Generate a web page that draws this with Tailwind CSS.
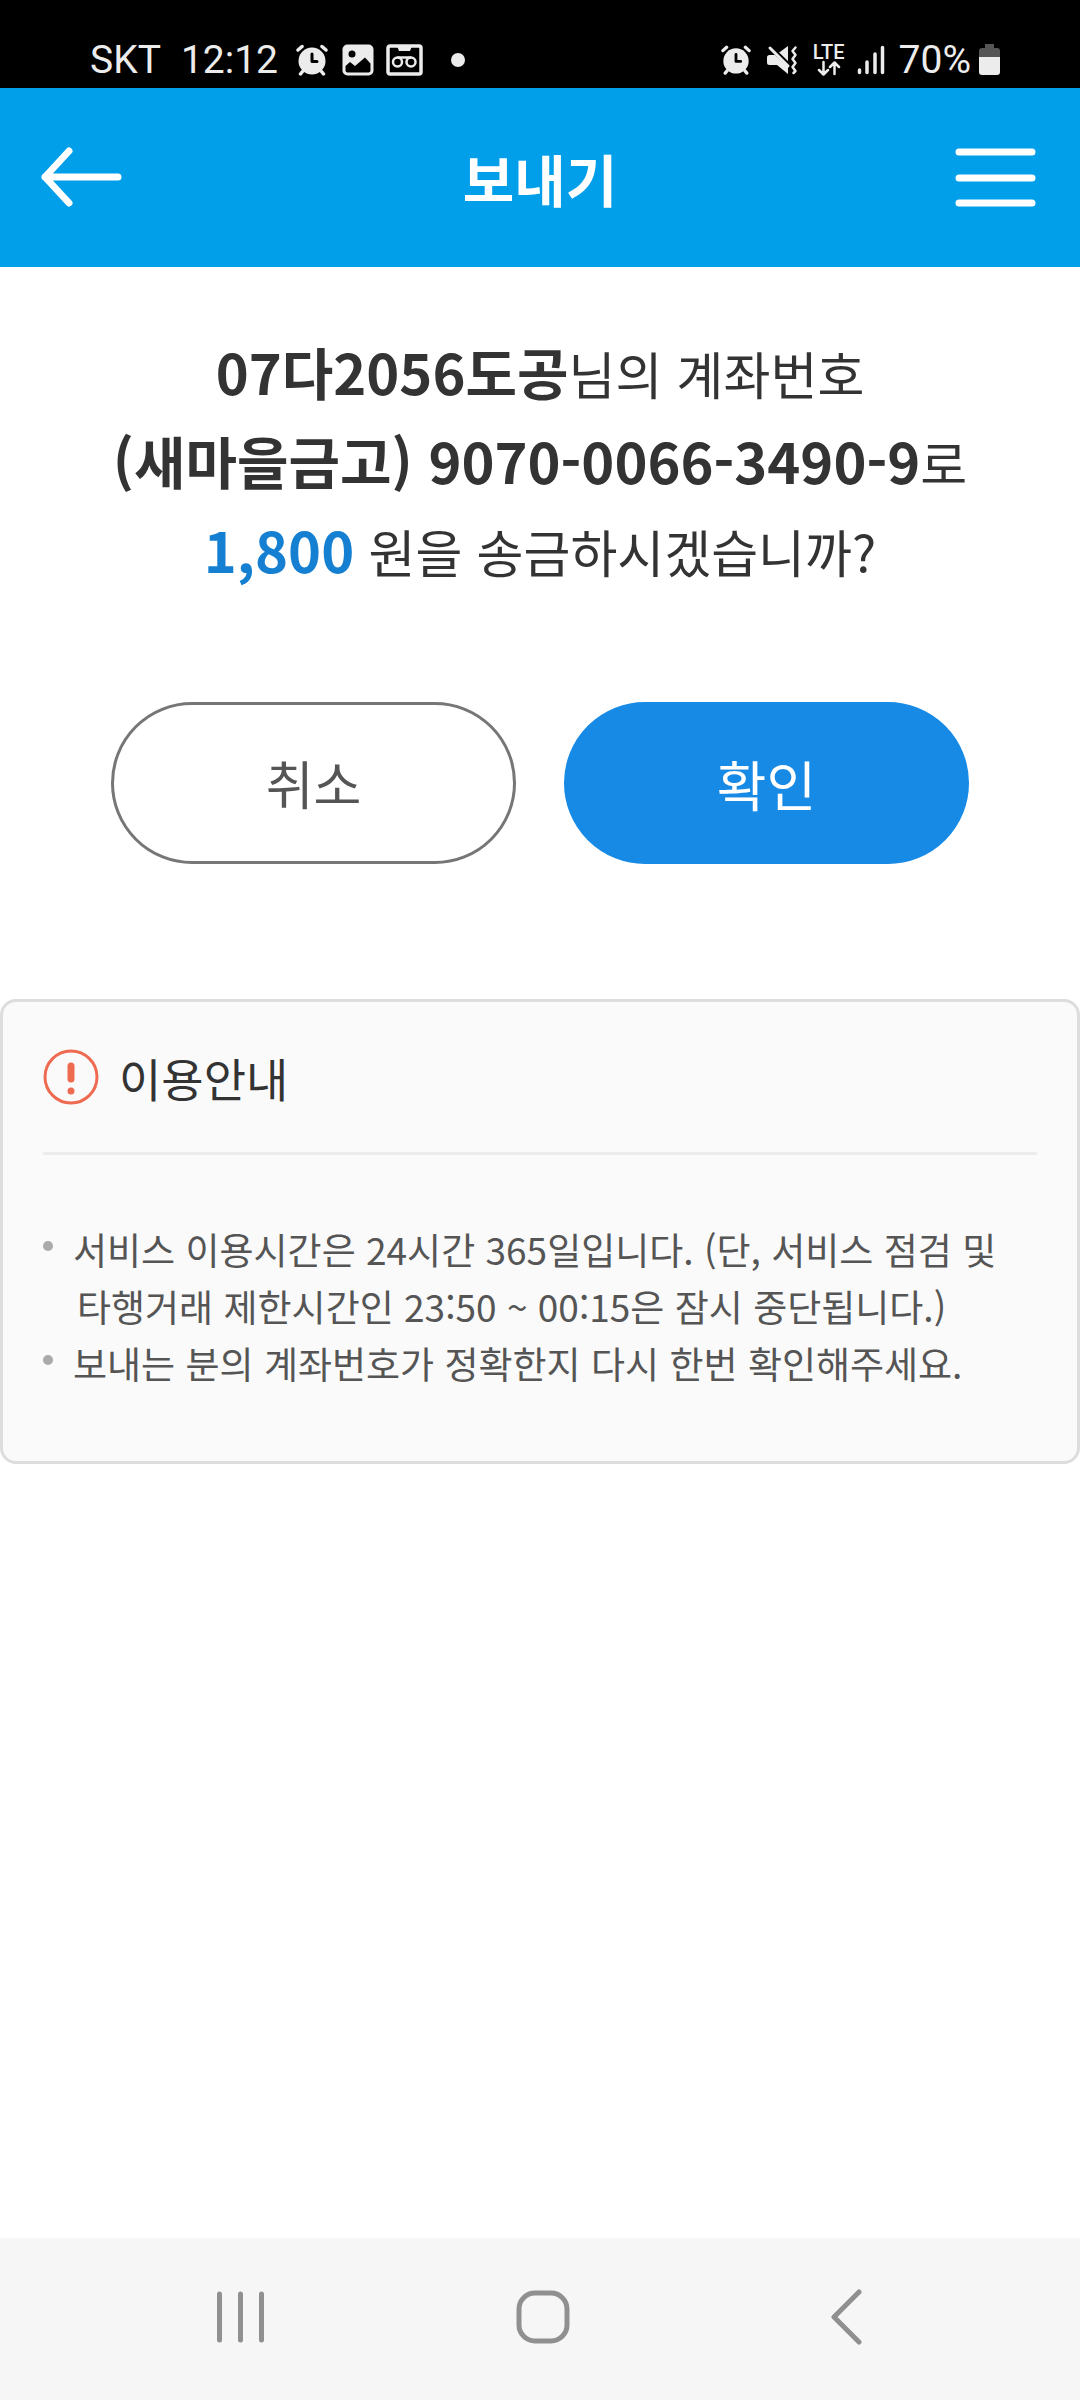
<!DOCTYPE html>
<html lang="ko">
<head>
<meta charset="utf-8">
<meta name="viewport" content="width=device-width, initial-scale=1">
<title>보내기</title>
<script src="https://cdn.jsdelivr.net/npm/@tailwindcss/browser@4"></script>
</head>
<body class="flex min-h-screen flex-col bg-white font-['Noto_Sans_CJK_KR',sans-serif] text-[#333333]">

<!-- Device status bar -->
<div class="flex h-22 items-center justify-between bg-black pt-8 pr-20 pl-[90px] font-['Roboto',sans-serif] text-[39px] leading-none text-[#ececec]">
  <div class="flex items-center">
    <span>SKT</span>
    <span class="ml-5">12:12</span>
    <svg class="ml-[18px] size-8" viewBox="0 0 32 32" fill="none" stroke="currentColor" aria-hidden="true">
      <circle cx="16" cy="17" r="13.500" fill="currentColor" stroke="none"/>
      <path d="M2 6 6 2.500M26 2.500 30 6M6.500 27.500l-2 2.500M25.500 27.500l2 2.500" stroke-width="3.500" stroke-linecap="round"/>
      <path d="M16 10v7.500h5" stroke="#000" stroke-width="3" stroke-linecap="round" stroke-linejoin="round"/>
    </svg>
    <svg class="ml-3.5 size-8" viewBox="0 0 32 32" aria-hidden="true">
      <rect x="0.500" y="0.500" width="31" height="31" rx="5" fill="currentColor"/>
      <circle cx="10" cy="10" r="3.500" fill="#000"/>
      <path d="M3.500 22 8 18l5 4 10-8.500 5.500 6v7q0 2-2 2H5.500q-2 0-2-2z" fill="#000"/>
    </svg>
    <svg class="ml-3 h-8 w-[37px]" viewBox="0 0 37 32" fill="none" stroke="currentColor" aria-hidden="true">
      <rect x="2" y="2" width="33" height="28" rx="2" stroke-width="3.500"/>
      <path d="M11 2h15l-2 5H13z" fill="currentColor" stroke="none"/>
      <circle cx="11.500" cy="18" r="4.500" stroke-width="2.500"/>
      <circle cx="25" cy="18" r="4.500" stroke-width="2.500"/>
      <path d="M11.500 13.500H25" stroke-width="2.500"/>
    </svg>
    <span class="ml-7 size-3.5 rounded-full bg-[#ececec]"></span>
  </div>
  <div class="flex items-center">
    <svg class="size-[30px]" viewBox="0 0 32 32" fill="none" stroke="currentColor" aria-hidden="true">
      <circle cx="16" cy="17" r="13.500" fill="currentColor" stroke="none"/>
      <path d="M2 6 6 2.500M26 2.500 30 6M6.500 27.500l-2 2.500M25.500 27.500l2 2.500" stroke-width="3.500" stroke-linecap="round"/>
      <path d="M16 10v7.500h5" stroke="#000" stroke-width="3" stroke-linecap="round" stroke-linejoin="round"/>
    </svg>
    <svg class="ml-4 h-[30px] w-8" viewBox="0 0 32 30" fill="none" stroke="currentColor" aria-hidden="true">
      <path d="M0 12.500Q0 10 2.500 10H8l13 12v7L10 20H2.500Q0 20 0 17.500zM11.500 8 21 1v16z" fill="currentColor" stroke="none"/>
      <path d="M5 2l17 16.500" stroke="#000" stroke-width="2"/>
      <path d="M3 3l18 18" stroke-width="3" stroke-linecap="round"/>
      <path d="M28.500 2.500l-3 3.500 3 4-3 4 3 4-3 4 3 4-2 2" stroke-width="2.500" stroke-linecap="round" stroke-linejoin="round"/>
    </svg>
    <span class="ml-3.5 flex w-8 flex-col items-center">
      <span class="text-[20px] leading-4 font-medium">LTE</span>
      <svg class="h-4 w-6" viewBox="0 0 24 16" fill="none" stroke="currentColor" stroke-width="2.500" stroke-linecap="round" stroke-linejoin="round" aria-hidden="true">
        <path d="M6.500 2v12M2 10l4.500 4.500L11 10M17.500 14V3M13 7l4.500-4.500L22 7"/>
      </svg>
    </span>
    <svg class="ml-3 h-[30px] w-7" viewBox="0 0 28 30" fill="none" stroke="currentColor" stroke-width="3.500" stroke-linecap="round" aria-hidden="true">
      <path d="M2.500 25v2.500M10 17v10.500M18 9v18.500M25.500 2.500v25"/>
    </svg>
    <span class="ml-3.5">70%</span>
    <svg class="ml-2 h-8 w-[21px]" viewBox="0 0 21 32" aria-hidden="true">
      <path d="M6 0h9v4h3q3 0 3 3v6H0V7q0-3 3-3h3z" fill="#555"/>
      <path d="M0 13h21v15q0 3-3 3H3q-3 0-3-3z" fill="currentColor"/>
    </svg>
  </div>
</div>

<header class="flex h-[179px] items-center justify-between bg-[#019ee9] px-10 text-white">
  <button type="button" aria-label="뒤로" class="h-16 w-[85px]">
    <svg class="size-full" viewBox="0 0 85 64" fill="none" stroke="currentColor" stroke-width="7" stroke-linecap="round" stroke-linejoin="round" aria-hidden="true">
      <path d="M5 31h73M29 5 5 31l24 26"/>
    </svg>
  </button>
  <h1 class="text-[56px] leading-20 font-bold">보내기</h1>
  <button type="button" aria-label="메뉴" class="h-16 w-[85px]">
    <svg class="size-full" viewBox="0 0 85 64" fill="none" stroke="currentColor" stroke-width="7" stroke-linecap="round" aria-hidden="true">
      <path d="M4 6h73M4 32h73M4 57h73"/>
    </svg>
  </button>
</header>

<main class="flex-1">
  <p class="pt-[62px] text-center text-[51px] leading-[89px]">
    <strong class="text-[56px] leading-none font-bold">07다2056도공</strong>님의 계좌번호<br>
    <strong class="text-[56px] leading-none font-bold">(새마을금고) 9070-0066-3490-9</strong>로<br>
    <strong class="text-[56px] leading-none font-bold text-[#157fd1]">1,800</strong> 원을 송금하시겠습니까?
  </p>

  <div class="mt-[106px] flex gap-12 px-[111px]">
    <button type="button" class="h-[162px] flex-1 rounded-full border-3 border-[#767676] bg-white text-[52px] text-[#555555]">취소</button>
    <button type="button" class="h-[162px] flex-1 rounded-full border-3 border-[#178ae6] bg-[#178ae6] text-[54px] text-white">확인</button>
  </div>

  <section class="mt-[135px] rounded-2xl border-3 border-[#dddddd] bg-[#fafafa] px-10 pb-[69px]">
    <div class="flex h-[153px] items-center gap-5 border-b-3 border-[#ececec]">
      <svg class="size-14" viewBox="0 0 56 56" fill="none" stroke="#ee6a50" aria-hidden="true">
        <circle cx="28" cy="28" r="26" stroke-width="3"/>
        <path d="M28 17v13" stroke-width="7" stroke-linecap="round"/>
        <circle cx="28" cy="42" r="3.500" fill="#ee6a50" stroke="none"/>
      </svg>
      <h2 class="text-[46px] leading-14">이용안내</h2>
    </div>
    <ul class="pt-[66px] text-[37px] leading-[57px] text-[#555555]">
      <li class="flex gap-5">
        <span class="mt-5 size-2.5 shrink-0 rounded-full bg-[#aaaaaa]"></span>
        <span class="pl-1 -indent-1">서비스 이용시간은 24시간 365일입니다. (단, 서비스 점검 및<br>타행거래 제한시간인 23:50 ~ 00:15은 잠시 중단됩니다.)</span>
      </li>
      <li class="flex gap-5">
        <span class="mt-5 size-2.5 shrink-0 rounded-full bg-[#aaaaaa]"></span>
        <span class="pl-1 -indent-1">보내는 분의 계좌번호가 정확한지 다시 한번 확인해주세요.</span>
      </li>
    </ul>
  </section>
</main>

<!-- Device navigation bar -->
<nav class="flex h-[162px] items-center justify-between bg-[#f6f6f6] pr-[204px] pl-[210px] text-[#909090]">
  <button type="button" aria-label="최근 앱" class="size-15">
    <svg class="size-full" viewBox="0 0 60 60" fill="none" stroke="currentColor" stroke-width="5" stroke-linecap="round" aria-hidden="true">
      <path d="M9.500 5v46M30.500 5v46M51.500 5v46"/>
    </svg>
  </button>
  <button type="button" aria-label="홈" class="size-15">
    <svg class="size-full" viewBox="0 0 60 60" fill="none" stroke="currentColor" stroke-width="5" aria-hidden="true">
      <rect x="6" y="4" width="48" height="48" rx="16"/>
    </svg>
  </button>
  <button type="button" aria-label="뒤로 가기" class="size-15">
    <svg class="size-full" viewBox="0 0 60 60" fill="none" stroke="currentColor" stroke-width="5" stroke-linecap="round" stroke-linejoin="round" aria-hidden="true">
      <path d="M43 3 18 28l25 25"/>
    </svg>
  </button>
</nav>
</body>
</html>
